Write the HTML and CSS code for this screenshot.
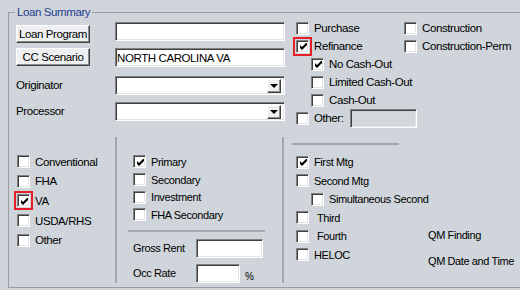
FILE: index.html
```html
<!DOCTYPE html>
<html lang="en">
<head>
    <meta charset="UTF-8">
    <title>Loan Summary</title>
    <link rel="stylesheet" href="styles.css">
</head>
<body>
    <fieldset class="group">
        <legend>Loan Summary</legend>
        <div class="top">
            <div class="fields">
                <button class="btn first">Loan Program</button>
                <input class="text" type="text" value="">
                <button class="btn">CC Scenario</button>
                <input class="text" type="text" value="NORTH CAROLINA VA">
                <label class="lbl">Originator</label>
                <div class="combo"><span class="drop"><i></i></span></div>
                <label class="lbl">Processor</label>
                <div class="combo"><span class="drop"><i></i></span></div>
            </div>
            <div class="purpose">
                <div class="stack">
                    <div class="check"><span class="box"></span>Purchase</div>
                    <div class="check"><span class="box on mark"><svg viewBox="0 0 7 7" width="7" height="7"><path d="M0 2 L2 4 L6 0 L7 0 L7 2 L2 7 L0 5 Z"/></svg></span>Refinance</div>
                    <div class="check sub"><span class="box on"><svg viewBox="0 0 7 7" width="7" height="7"><path d="M0 2 L2 4 L6 0 L7 0 L7 2 L2 7 L0 5 Z"/></svg></span>No Cash-Out</div>
                    <div class="check sub"><span class="box"></span>Limited Cash-Out</div>
                    <div class="check sub"><span class="box"></span>Cash-Out</div>
                    <div class="check other"><span class="box"></span>Other:<input class="text off" type="text" value="" disabled></div>
                </div>
                <div class="stack">
                    <div class="check"><span class="box"></span>Construction</div>
                    <div class="check"><span class="box"></span>Construction-Perm</div>
                </div>
            </div>
        </div>
        <div class="bottom">
            <div class="types">
                <div class="check"><span class="box"></span>Conventional</div>
                <div class="check"><span class="box"></span>FHA</div>
                <div class="check"><span class="box on mark"><svg viewBox="0 0 7 7" width="7" height="7"><path d="M0 2 L2 4 L6 0 L7 0 L7 2 L2 7 L0 5 Z"/></svg></span>VA</div>
                <div class="check"><span class="box"></span>USDA/RHS</div>
                <div class="check"><span class="box"></span>Other</div>
            </div>
            <div class="occupancy">
                <div class="check"><span class="box on"><svg viewBox="0 0 7 7" width="7" height="7"><path d="M0 2 L2 4 L6 0 L7 0 L7 2 L2 7 L0 5 Z"/></svg></span>Primary</div>
                <div class="check"><span class="box"></span>Secondary</div>
                <div class="check"><span class="box"></span>Investment</div>
                <div class="check"><span class="box"></span>FHA Secondary</div>
                <div class="rule"></div>
                <div class="rent">
                    <label>Gross Rent</label>
                    <input class="text rent-in" type="text" value="">
                    <label>Occ Rate</label>
                    <div class="rate"><input class="text rate-in" type="text" value=""><span class="pct">%</span></div>
                </div>
            </div>
            <div class="liens">
                <div class="rule short"></div>
                <div class="liens-body">
                    <div class="list">
                        <div class="check"><span class="box on"><svg viewBox="0 0 7 7" width="7" height="7"><path d="M0 2 L2 4 L6 0 L7 0 L7 2 L2 7 L0 5 Z"/></svg></span>First Mtg</div>
                        <div class="check"><span class="box"></span>Second Mtg</div>
                        <div class="check sub"><span class="box"></span>Simultaneous Second</div>
                        <div class="check"><span class="box"></span><span class="pad">Third</span></div>
                        <div class="check"><span class="box"></span><span class="pad">Fourth</span></div>
                        <div class="check"><span class="box"></span>HELOC</div>
                    </div>
                    <div class="qm">
                        <div>QM Finding</div>
                        <div class="qm-date">QM Date and Time</div>
                    </div>
                </div>
            </div>
        </div>
    </fieldset>
</body>
</html>
```
FILE: styles.css
```css
body {
    margin: 0;
    height: 290px;
    overflow: hidden;
    background-color: #cfd5da;
    font-family: "Liberation Sans", Arial, sans-serif;
    font-size: 11.5px;
    letter-spacing: -0.4px;
    color: #000;
}
.group {
    margin: 5px 0 0 8px;
    padding: 0 0 7px 0;
    border: 1px solid #999da1;
    border-right: none;
    min-width: 0;
}
legend {
    margin-left: 6px;
    padding: 0 2px;
    line-height: 14px;
    color: #1f3d8d;
}
.top {
    display: flex;
    height: 118px;
    padding-left: 7px;
}
.fields {
    display: grid;
    grid-template-columns: 99px 170px;
    grid-template-rows: 26px 28px 26px 20px;
    align-items: start;
    padding-top: 3px;
}
.btn {
    width: 74px;
    height: 18px;
    padding: 0;
    font: inherit;
    letter-spacing: inherit;
    background-color: #eeeff0;
    border: 1px solid;
    border-color: #fff #404040 #404040 #fff;
    box-shadow: inset -1px -1px 0 #8a8a8a;
}
.btn.first {
    margin-top: 3px;
}
.text {
    box-sizing: border-box;
    height: 19px;
    margin: 0;
    padding: 0 1px;
    font: inherit;
    letter-spacing: inherit;
    background-color: #fff;
    border: 1px solid;
    border-color: #808080 #fff #fff #808080;
    box-shadow: inset 1px 1px 0 #404040, inset -1px -1px 0 #e4e4e4;
    outline: none;
}
.fields .text {
    width: 170px;
}
.lbl {
    line-height: 19px;
}
.combo {
    box-sizing: border-box;
    width: 170px;
    height: 19px;
    display: flex;
    justify-content: flex-end;
    align-items: center;
    padding-right: 3px;
    background-color: #fff;
    border: 1px solid;
    border-color: #808080 #fff #fff #808080;
    box-shadow: inset 1px 1px 0 #404040, inset -1px -1px 0 #e4e4e4;
}
.drop {
    box-sizing: border-box;
    width: 14px;
    height: 14px;
    display: flex;
    justify-content: center;
    align-items: center;
    background-color: #eeeff0;
    border: 1px solid;
    border-color: #fff #404040 #404040 #fff;
    box-shadow: inset -1px -1px 0 #8a8a8a;
}
.drop i {
    width: 0;
    height: 0;
    border-left: 4px solid transparent;
    border-right: 4px solid transparent;
    border-top: 4px solid #000;
}
.purpose {
    display: flex;
    margin-left: 11px;
}
.stack {
    width: 108px;
}
.check {
    display: flex;
    align-items: center;
    height: 18px;
    white-space: nowrap;
}
.box {
    box-sizing: border-box;
    flex: none;
    width: 13px;
    height: 13px;
    margin-right: 5px;
    display: flex;
    justify-content: center;
    align-items: center;
    background-color: #fff;
    border: 1px solid;
    border-color: #808080 #fff #fff #808080;
    box-shadow: inset 1px 1px 0 #404040, inset -1px -1px 0 #e4e4e4;
}
.box svg {
    fill: #000;
    margin: 1px 0 0 1px;
}
.mark {
    outline: 2px solid #e3202a;
    outline-offset: 1px;
}
.sub {
    padding-left: 15px;
}
.other .text {
    width: 67px;
    margin-left: 6px;
    background-color: #d3d8dc;
}
.bottom {
    display: grid;
    grid-template-columns: 106px 167px 1fr;
    height: 143px;
}
.types {
    padding: 15px 0 0 8px;
}
.types .check {
    height: 19.6px;
}
.occupancy {
    border-left: 2px solid #a3a7ab;
    padding: 16px 0 0 16px;
    font-size: 11px;
}
.occupancy .check {
    height: 17.7px;
}
.rule {
    height: 2px;
    width: 137px;
    margin: 6px 0 0 -5px;
    background-color: #a3a7ab;
}
.rent {
    display: grid;
    grid-template-columns: 63px auto;
    row-gap: 6px;
    align-items: center;
    margin-top: 7px;
}
.rent-in {
    width: 67px;
}
.rate {
    display: flex;
    align-items: flex-end;
}
.rate-in {
    width: 44px;
}
.pct {
    margin-left: 5px;
    font-size: 10px;
    line-height: 12px;
}
.liens {
    border-left: 2px solid #a3a7ab;
    font-size: 11px;
}
.rule.short {
    width: 107px;
    margin: 6px 0 0 8px;
}
.liens-body {
    display: flex;
}
.list {
    width: 132px;
    padding: 8px 0 0 12px;
}
.list .check {
    height: 18.5px;
}
.pad {
    padding-left: 3px;
}
.qm {
    padding-top: 83px;
    line-height: 14px;
}
.qm-date {
    margin-top: 12px;
}
```
